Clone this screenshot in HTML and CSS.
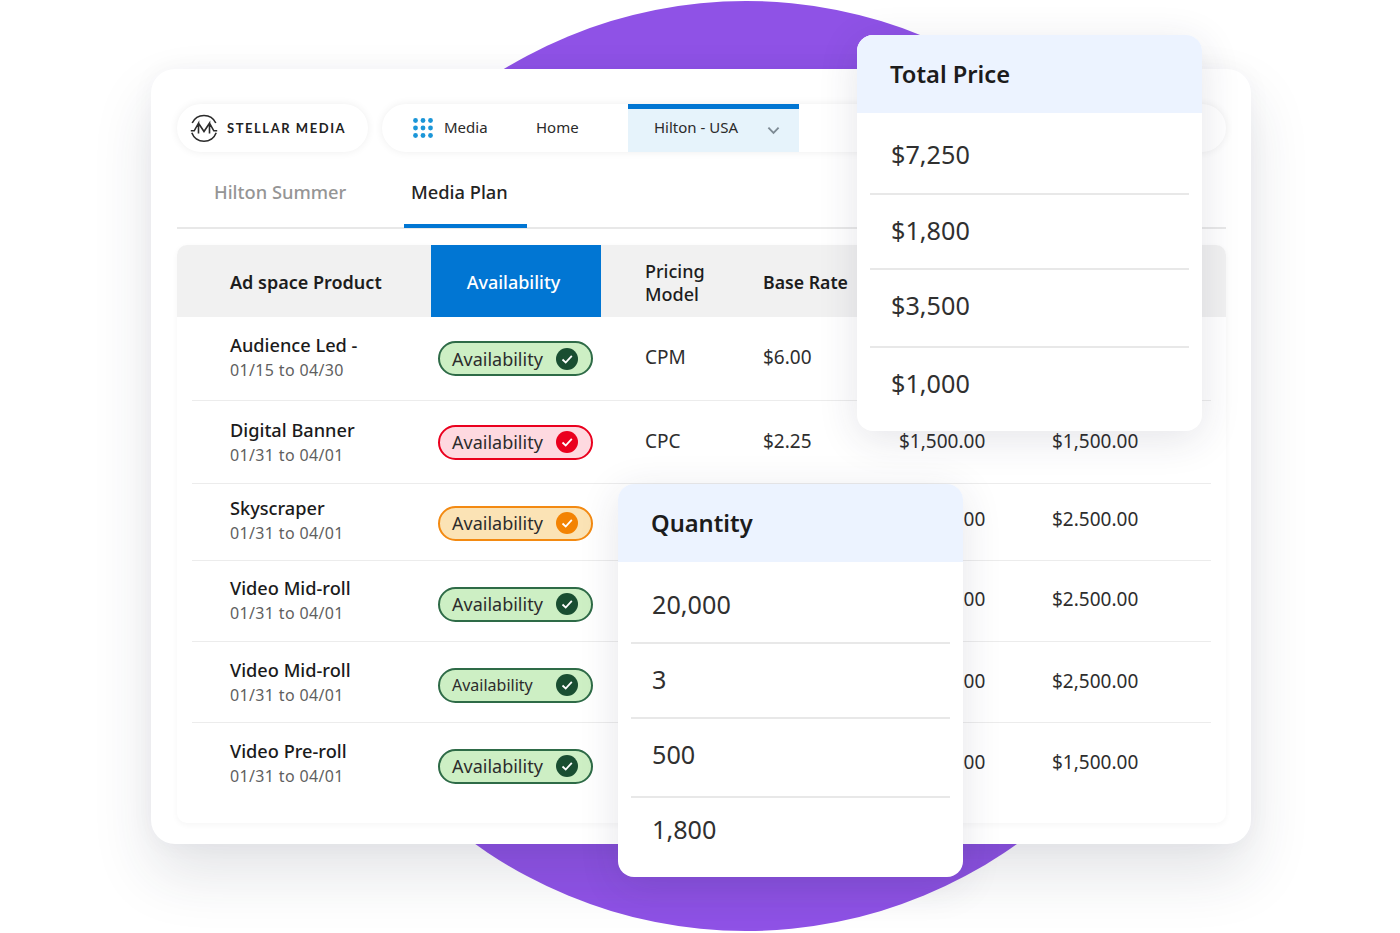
FILE: index.html
```html
<!DOCTYPE html>
<html lang="en">
<head>
<meta charset="utf-8">
<title>Stellar Media</title>
<link rel="stylesheet" href="styles.css">
</head>
<body>
<div class="stage">
  <div class="circle"></div>
  <main class="card">
    <header class="topbar">
      <div class="logo">
        <svg class="logo-mark" viewBox="0 0 28 28" fill="none" stroke="#2b2b2b" stroke-width="1.6">
          <path d="M2.2 9A13 13 0 0 1 25.8 9"/>
          <path d="M1.8 18.8A13 13 0 0 0 26.2 18.8"/>
          <path d="M0.8 16.8H4.2L8.5 9.2V19.5M8.5 9.2L14 17.5L19.5 9.2V19.5M19.5 9.2L23.8 16.8H27.2"/>
        </svg>
        <span class="logo-text">STELLAR MEDIA</span>
      </div>
      <nav class="nav">
        <svg class="apps" viewBox="0 0 20 20" fill="#1b96d8">
          <circle cx="2.5" cy="2.5" r="2.4"/><circle cx="10" cy="2.5" r="2.4"/><circle cx="17.5" cy="2.5" r="2.4"/>
          <circle cx="2.5" cy="10" r="2.4"/><circle cx="10" cy="10" r="2.4"/><circle cx="17.5" cy="10" r="2.4"/>
          <circle cx="2.5" cy="17.5" r="2.4"/><circle cx="10" cy="17.5" r="2.4"/><circle cx="17.5" cy="17.5" r="2.4"/>
        </svg>
        <span class="nav-media">Media</span>
        <span class="nav-home">Home</span>
        <div class="nav-active">
          <span>Hilton - USA</span>
          <svg class="chev" viewBox="0 0 14 9" fill="none" stroke="#7d8a94" stroke-width="2"><path d="M1.5 1.5L7 7L12.5 1.5"/></svg>
        </div>
      </nav>
    </header>
    <div class="tabs">
      <span class="tab tab-muted">Hilton Summer</span>
      <span class="tab tab-current">Media Plan</span>
    </div>
    <section class="table">
      <div class="thead">
        <div class="th th-product">Ad space Product</div>
        <div class="th th-avail">Availability</div>
        <div class="th th-pricing">Pricing<br>Model</div>
        <div class="th th-base">Base Rate</div>
      </div>

      <div class="row r1">
        <div class="product"><b>Audience Led -</b><span>01/15 to 04/30</span></div>
        <div class="badge-cell"><span class="badge green">Availability<svg class="ico" viewBox="0 0 22 22"><circle cx="11" cy="11" r="11"/><path d="M6.5 11.5L9.7 14.5L15.8 7.8"/></svg></span></div>
        <div class="cell pricing">CPM</div>
        <div class="cell">$6.00</div>
      </div>
      <div class="row r2">
        <div class="product"><b>Digital Banner</b><span>01/31 to 04/01</span></div>
        <div class="badge-cell"><span class="badge red">Availability<svg class="ico" viewBox="0 0 22 22"><circle cx="11" cy="11" r="11"/><path d="M6.5 11.5L9.7 14.5L15.8 7.8"/></svg></span></div>
        <div class="cell pricing">CPC</div>
        <div class="cell">$2.25</div>
        <div class="cell">$1,500.00</div>
        <div class="cell">$1,500.00</div>
      </div>
      <div class="row r3">
        <div class="product"><b>Skyscraper</b><span>01/31 to 04/01</span></div>
        <div class="badge-cell"><span class="badge orange">Availability<svg class="ico" viewBox="0 0 22 22"><circle cx="11" cy="11" r="11"/><path d="M6.5 11.5L9.7 14.5L15.8 7.8"/></svg></span></div>
        <div class="cell-skip"></div>
        <div class="cell">$2,500.00</div>
        <div class="cell">$2.500.00</div>
      </div>
      <div class="row r4">
        <div class="product"><b>Video Mid-roll</b><span>01/31 to 04/01</span></div>
        <div class="badge-cell"><span class="badge green">Availability<svg class="ico" viewBox="0 0 22 22"><circle cx="11" cy="11" r="11"/><path d="M6.5 11.5L9.7 14.5L15.8 7.8"/></svg></span></div>
        <div class="cell-skip"></div>
        <div class="cell">$2,500.00</div>
        <div class="cell">$2.500.00</div>
      </div>
      <div class="row r5">
        <div class="product"><b>Video Mid-roll</b><span>01/31 to 04/01</span></div>
        <div class="badge-cell"><span class="badge green small">Availability<svg class="ico" viewBox="0 0 22 22"><circle cx="11" cy="11" r="11"/><path d="M6.5 11.5L9.7 14.5L15.8 7.8"/></svg></span></div>
        <div class="cell-skip"></div>
        <div class="cell">$2,500.00</div>
        <div class="cell">$2,500.00</div>
      </div>
      <div class="row r6">
        <div class="product"><b>Video Pre-roll</b><span>01/31 to 04/01</span></div>
        <div class="badge-cell"><span class="badge green">Availability<svg class="ico" viewBox="0 0 22 22"><circle cx="11" cy="11" r="11"/><path d="M6.5 11.5L9.7 14.5L15.8 7.8"/></svg></span></div>
        <div class="cell-skip"></div>
        <div class="cell">$1,500.00</div>
        <div class="cell">$1,500.00</div>
      </div>
    </section>
  </main>

  <aside class="pop pop-price">
    <h2 class="pop-title">Total Price</h2>
    <ul class="pop-list">
      <li class="p1">$7,250</li>
      <li class="p2">$1,800</li>
      <li class="p3">$3,500</li>
      <li class="p4">$1,000</li>
    </ul>
  </aside>
  <aside class="pop pop-qty">
    <h2 class="pop-title">Quantity</h2>
    <ul class="pop-list">
      <li class="q1">20,000</li>
      <li class="q2">3</li>
      <li class="q3">500</li>
      <li class="q4">1,800</li>
    </ul>
  </aside>
</div>
</body>
</html>
```
FILE: styles.css
```css
* { box-sizing: border-box; }
html, body { margin: 0; height: 100%; background: #fff; overflow: hidden; }
body { font-family: "Noto Sans", "Open Sans", sans-serif; color: #181818; }

.stage { position: relative; width: 1400px; height: 933px; padding: 69px 149px 0 151px; overflow: hidden; }
.circle { position: absolute; left: 281px; top: 1px; width: 930px; height: 930px; border-radius: 50%; background: #8f52e6; }

.card {
  position: relative; height: 775px; padding: 35px 25px 0 26px;
  background: #fff; border-radius: 24px;
  box-shadow: 0 30px 60px rgba(40, 45, 70, .13), 0 0 24px rgba(40, 45, 70, .04);
}

.topbar { display: flex; gap: 14px; height: 48px; }
.logo {
  display: flex; align-items: center; gap: 9px; width: 191px; padding-left: 13px;
  background: #fff; border-radius: 24px; box-shadow: 0 0 8px rgba(0, 0, 0, .07);
}
.logo-mark { width: 28px; height: 28px; flex: none; overflow: visible; }
.logo-text { font-family: "Lato", sans-serif; font-size: 13px; font-weight: 700; letter-spacing: 1.55px; color: #222; white-space: nowrap; }

.nav {
  flex: 1; display: flex; align-items: center; padding-left: 31px;
  background: #fff; border-radius: 24px; box-shadow: 0 0 8px rgba(0, 0, 0, .07);
  font-size: 15px; color: #2a2a2a;
}
.apps { width: 20px; height: 20px; flex: none; }
.nav-media { margin-left: 11px; width: 92px; padding-bottom: 2px; }
.nav-home { width: 92px; padding-bottom: 2px; }
.nav-active {
  display: flex; align-items: center; justify-content: space-between;
  align-self: stretch; width: 171px; padding: 0 19px 4px 26px;
  background: #e6f3fb; border-top: 5px solid #0176d3;
}
.nav-active span { margin-bottom: 3px; }
.chev { width: 13px; height: 9px; margin-top: 3px; }

.tabs { display: flex; height: 77px; border-bottom: 2px solid #e8e8e8; padding-left: 27px; }
.tab { display: flex; align-items: center; height: 76px; font-size: 18.3px; font-weight: 500; white-space: nowrap; }
.tab-muted { width: 200px; padding: 2px 0 0 10px; color: #959595; }
.tab-current { width: 123px; padding: 6px 0 0 7px; color: #242424; border-bottom: 4px solid #0176d3; }

.table {
  height: 578px; margin-top: 16px; background: #fff; border-radius: 10px;
  box-shadow: 0 2px 6px rgba(0, 0, 0, .04); overflow: hidden;
}
.thead {
  display: grid; grid-template-columns: 254px 170px 162px 136px;
  height: 72px; background: #f1f1f1; font-size: 18px; font-weight: 600; line-height: 23px; color: #1d1d1d;
}
.th { display: flex; align-items: center; padding-top: 3px; }
.th-product { padding-left: 53px; }
.th-avail { justify-content: center; padding-right: 5px; background: #0176d3; color: #fff; font-weight: 500; }
.th-pricing { padding-left: 44px; font-weight: 500; }
.th-base { font-size: 17.7px; white-space: nowrap; }

.row {
  display: grid; grid-template-columns: 239px 170px 162px 136px 153px 1fr;
  margin: 0 15px; border-bottom: 1.5px solid #ececec; align-items: center;
}
.r1 { height: 84px; --name: 3px; --badge: 0px; --cell: 3px; }
.r2 { height: 83px; --name: 0px; --badge: 0px; --cell: 2px; }
.r3 { height: 77px; --name: 4px; --badge: 2px; --cell: 6px; }
.r4 { height: 81px; --name: 3px; --badge: 6px; --cell: 4px; }
.r5 { height: 81px; --name: 0px; --badge: 6px; --cell: 2px; }
.r6 { height: 99px; --name: 19px; --badge: -13px; --cell: 21px; border-bottom: 0; }

.product { display: flex; flex-direction: column; padding-left: 38px; margin-bottom: var(--name); }
.product b { font-size: 18.2px; font-weight: 500; line-height: 26px; color: #1b1b1b; }
.product span { font-size: 16px; line-height: 24px; color: #5f5f5f; letter-spacing: .35px; }

.badge-cell { padding-left: 7px; margin-top: var(--badge); }
.badge {
  display: flex; align-items: center; justify-content: space-between;
  width: 155px; height: 35px; padding: 0 13px 0 12px;
  border: 2px solid; border-radius: 18px; font-size: 18px; color: #2c2c2c;
}
.badge.small { font-size: 16px; }
.ico { width: 22px; height: 22px; flex: none; }
.ico path { fill: none; stroke: #fff; stroke-width: 1.8; }
.green { background: #cdefc4; border-color: #2e6b47; }
.green .ico circle { fill: #194e31; }
.red { background: #fed9e0; border-color: #ea001e; }
.red .ico circle { fill: #ea001e; }
.orange { background: #fbe3b5; border-color: #f38a12; }
.orange .ico circle { fill: #f38303; }

.cell { font-size: 19px; color: #2e2e2e; margin-bottom: var(--cell); }
.pricing { padding-left: 44px; }
.cell-skip { grid-column: span 2; }

.pop {
  position: absolute; width: 345px; background: #fff; border-radius: 16px;
  box-shadow: 0 8px 40px rgba(40, 45, 70, .12); overflow: hidden;
}
.pop-price { left: 857px; top: 35px; height: 396px; }
.pop-qty { left: 618px; top: 484px; height: 393px; }
.pop-title {
  display: flex; align-items: center; height: 78px; margin: 0; padding-left: 33px;
  background: #ecf3ff; font-size: 23.7px; font-weight: 600; color: #1c1c1c;
}
.pop-list { list-style: none; margin: 0; padding: 0 13px; }
.pop-list li {
  display: flex; align-items: center; padding-left: 21px;
  font-size: 25.2px; color: #303030; border-bottom: 2px solid #e8e8e8;
}
.p1 { height: 82px; padding-top: 2px; }
.p2 { height: 75px; padding-bottom: 3px; }
.p3 { height: 78px; padding-bottom: 7px; }
.pop-list .p4 { height: 76px; padding-bottom: 6px; border-bottom: 0; }
.q1 { height: 82px; padding-top: 3px; }
.q2 { height: 75px; padding-bottom: 3px; }
.q3 { height: 79px; padding-bottom: 7px; }
.pop-list .q4 { height: 76px; padding-bottom: 14px; border-bottom: 0; }
```
